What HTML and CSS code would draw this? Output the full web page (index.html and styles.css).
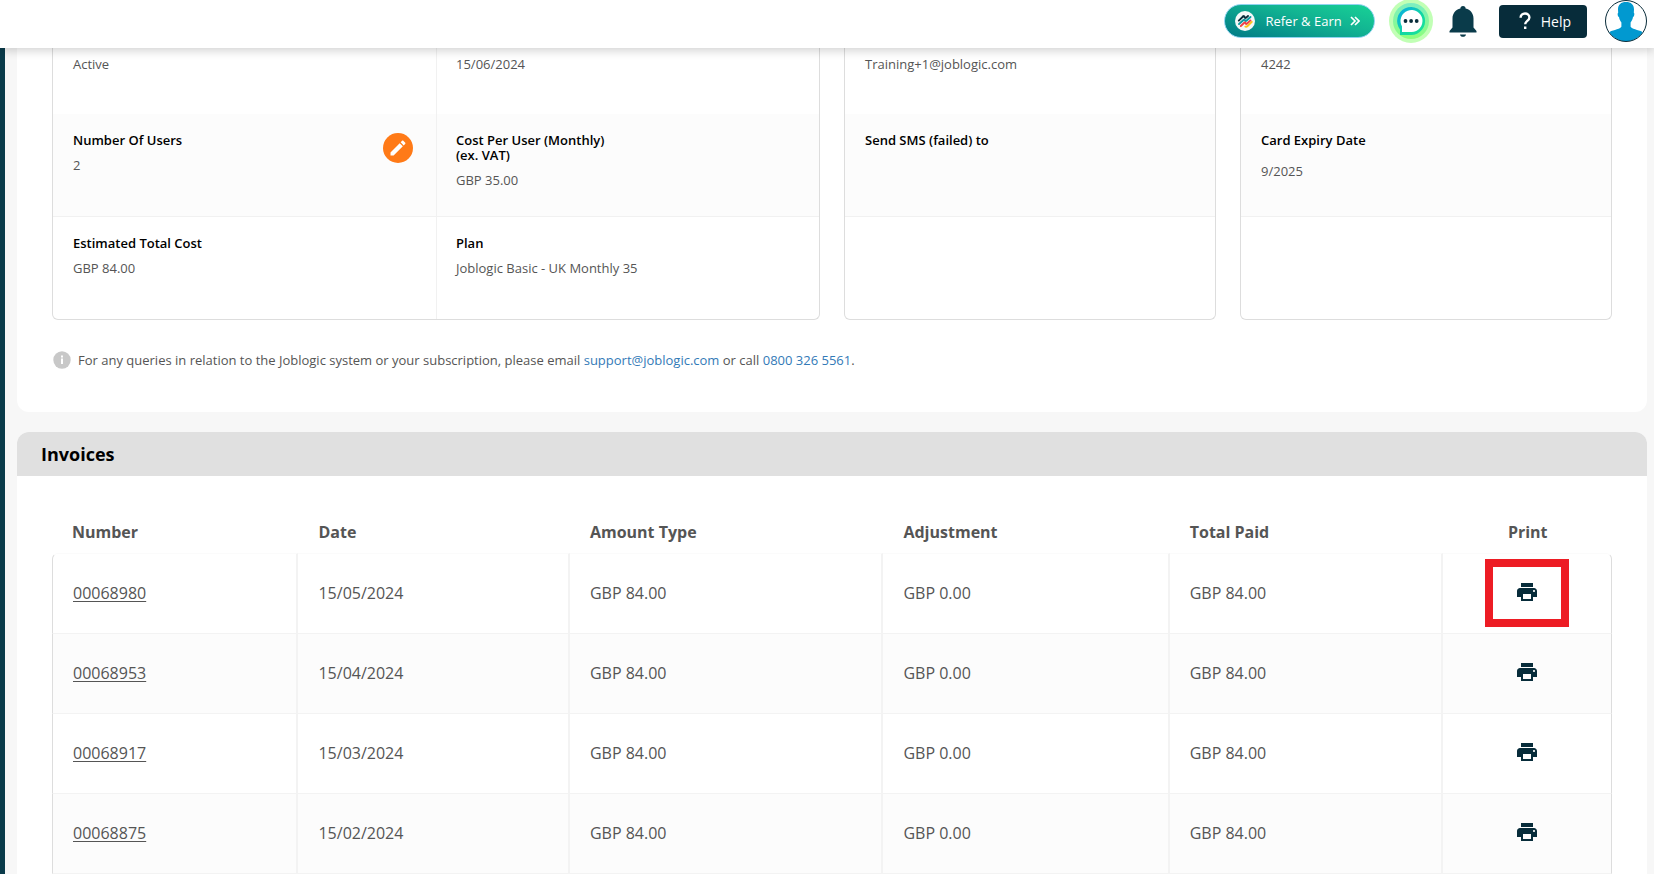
FILE: index.html
```html
<!DOCTYPE html>
<html lang="en">
<head>
<meta charset="utf-8">
<title>Subscription</title>
<link rel="stylesheet" href="styles.css">
</head>
<body>
<svg class="sprite" aria-hidden="true">
  <symbol id="print" viewBox="0 0 24 24"><path d="M19 8H5c-1.660 0-3 1.340-3 3v6h4v4h12v-4h4v-6c0-1.660-1.340-3-3-3zm-3 11H8v-5h8v5zm3-7c-.55 0-1-.45-1-1s.45-1 1-1 1 .45 1 1-.45 1-1 1zm-1-9H6v4h12V3z"/></symbol>
</svg>
<header class="topbar">
  <button class="refer" type="button">
    <svg class="refer-logo" viewBox="0 0 20 20" aria-hidden="true">
      <circle cx="10" cy="10" r="10" fill="#f4f8f8"/>
      <g fill="none" stroke-width="1.900" stroke-linecap="round" stroke-linejoin="round">
        <path d="M3.800 9.600 8.300 5.300" stroke="#0a2c3a"/>
        <path d="M8.300 5.300q1.300-.6 1.300.8t1.600.5L13 5" stroke="#0a2c3a"/>
        <path d="M4 13 8.500 9q1.300-.8 1.600.4t1.600.1L15.500 6" stroke="#0a9aa0"/>
        <path d="M5.800 15 9.300 11.700q1.200-.6 1.400.6t1.500.2L15.500 9.400" stroke="#ee4046"/>
        <path d="M10.300 15.600q1.300.4 2.300-.6L16.800 10.800" stroke="#fbc51b"/>
      </g>
    </svg>
    <span>Refer &amp; Earn</span>
    <svg class="refer-arrows" viewBox="0 0 10 10" aria-hidden="true"><path d="M1 1l4 4-4 4M5 1l4 4-4 4" fill="none" stroke="#fff" stroke-width="1.700"/></svg>
  </button>
  <button class="icon-button chat" type="button" aria-label="Chat">
    <svg viewBox="0 0 44 44">
      <defs><linearGradient id="chatRing" x1="0" y1="0" x2="1" y2="1"><stop offset="0" stop-color="#08a9e8"/><stop offset=".6" stop-color="#12d9a0"/><stop offset="1" stop-color="#1be39a"/></linearGradient>
      <linearGradient id="chatGlow" x1="0" y1="0" x2="0" y2="1"><stop offset="0" stop-color="#7ceec2"/><stop offset="1" stop-color="#8dff7c"/></linearGradient></defs>
      <circle cx="22" cy="22" r="22" fill="#c1ffb5"/>
      <circle cx="22" cy="22" r="18" fill="url(#chatGlow)"/>
      <path d="M11 36V30.500A14 14 0 1 1 22 36z" fill="url(#chatRing)"/>
      <path d="M13 33V27.500A11 11 0 1 1 22.500 33z" fill="#fff"/>
      <g fill="#082c3a"><circle cx="16.500" cy="22" r="1.900"/><circle cx="22.100" cy="22" r="1.900"/><circle cx="27.700" cy="22" r="1.900"/></g>
    </svg>
  </button>
  <button class="icon-button bell" type="button" aria-label="Notifications">
    <svg viewBox="0 0 28 32"><path d="M14 1a2.600 2.600 0 0 1 2.600 2.600C21.500 4.800 24.500 8.500 24.500 13.500v9l3 3.500V27.500H.5V26l3-3.500v-9c0-5 3-8.700 7.900-9.900A2.600 2.600 0 0 1 14 1zM11 29.500h6c-.2 1.400-1.500 2.300-3 2.300s-2.800-.9-3-2.300z" fill="#0a3b4a"/></svg>
  </button>
  <button class="help" type="button"><svg viewBox="0 0 12 18" aria-hidden="true"><path d="M1.600 5.800C1.600 3.300 3.500 1.500 6 1.500s4.400 1.700 4.400 4c0 3.200-4.200 3.600-4.200 6.700" fill="none" stroke="#fff" stroke-width="2.400"/><path d="M5 14.500h2.400V17H5z" fill="#fff"/></svg><span>Help</span></button>
  <button class="icon-button avatar" type="button" aria-label="Profile">
    <svg viewBox="0 0 42 42"><defs><clipPath id="face"><circle cx="21" cy="21" r="20.300"/></clipPath></defs><circle cx="21" cy="21" r="20.500" fill="#fff"/><path clip-path="url(#face)" d="M21 2c5 0 8 2.500 8 7.500l-.2 3.200c.9.400.7 3.600-.8 4.400-.4 2.400-1.200 3.900-2.400 5.400v4.200c3 3.500 9.500 2.800 13.400 6.300V42H3v-9c3.900-3.500 10.400-2.800 13.400-6.300v-4.200c-1.200-1.500-2-3-2.400-5.400-1.500-.8-1.700-4-.8-4.400L13 9.500C13 4.500 16 2 21 2z" fill="#0199d0"/><circle cx="21" cy="21" r="20.500" fill="none" stroke="#0a2c3a"/></svg>
  </button>
</header>

<main class="page">
  <section class="panel subscription">
    <div class="cards">
      <div class="card card-wide">
        <div class="cell"><p class="value">Active</p></div>
        <div class="cell"><p class="value">15/06/2024</p></div>
        <div class="cell shaded with-action">
          <div><h3 class="label">Number Of Users</h3><p class="value">2</p></div>
          <button class="edit" type="button" aria-label="Edit number of users"><svg viewBox="0 0 24 24"><path d="M3 17.250V21h3.750L17.810 9.940l-3.750-3.750L3 17.250zM20.710 7.040c.39-.39.39-1.020 0-1.410l-2.340-2.340c-.39-.39-1.020-.39-1.410 0l-1.830 1.830 3.750 3.750 1.830-1.830z" fill="#fff"/></svg></button>
        </div>
        <div class="cell shaded"><h3 class="label">Cost Per User (Monthly)<br>(ex. VAT)</h3><p class="value">GBP 35.00</p></div>
        <div class="cell"><h3 class="label">Estimated Total Cost</h3><p class="value">GBP 84.00</p></div>
        <div class="cell"><h3 class="label">Plan</h3><p class="value">Joblogic Basic - UK Monthly 35</p></div>
      </div>
      <div class="card">
        <div class="cell"><p class="value">Training+1@joblogic.com</p></div>
        <div class="cell shaded"><h3 class="label">Send SMS (failed) to</h3></div>
        <div class="cell"></div>
      </div>
      <div class="card">
        <div class="cell"><p class="value">4242</p></div>
        <div class="cell shaded spaced"><h3 class="label">Card Expiry Date</h3><p class="value">9/2025</p></div>
        <div class="cell"></div>
      </div>
    </div>
    <div class="note">
      <svg viewBox="0 0 18 18" aria-hidden="true"><circle cx="9" cy="9" r="8.700" fill="#c8c8c8"/><path d="M8 4.500h2v2H8zM8 7.500h2V13H8z" fill="#fff"/></svg>
      <p>For any queries in relation to the Joblogic system or your subscription, please email <a href="mailto:support@joblogic.com">support@joblogic.com</a> or call <a href="tel:08003265561">0800 326 5561</a>.</p>
    </div>
  </section>

  <section class="panel">
    <h2 class="panel-title">Invoices</h2>
    <div class="invoice-body">
      <table class="invoices">
        <colgroup><col class="col-number"><col class="col-date"><col class="col-amount"><col class="col-adjust"><col class="col-total"><col class="col-print"></colgroup>
        <thead><tr><th>Number</th><th>Date</th><th>Amount Type</th><th>Adjustment</th><th>Total Paid</th><th>Print</th></tr></thead>
        <tbody>
          <tr><td><a href="#">00068980</a></td><td>15/05/2024</td><td>GBP 84.00</td><td>GBP 0.00</td><td>GBP 84.00</td><td><button class="print highlighted" type="button" aria-label="Print invoice 00068980"><svg><use href="#print"/></svg></button></td></tr>
          <tr><td><a href="#">00068953</a></td><td>15/04/2024</td><td>GBP 84.00</td><td>GBP 0.00</td><td>GBP 84.00</td><td><button class="print" type="button" aria-label="Print invoice 00068953"><svg><use href="#print"/></svg></button></td></tr>
          <tr><td><a href="#">00068917</a></td><td>15/03/2024</td><td>GBP 84.00</td><td>GBP 0.00</td><td>GBP 84.00</td><td><button class="print" type="button" aria-label="Print invoice 00068917"><svg><use href="#print"/></svg></button></td></tr>
          <tr><td><a href="#">00068875</a></td><td>15/02/2024</td><td>GBP 84.00</td><td>GBP 0.00</td><td>GBP 84.00</td><td><button class="print" type="button" aria-label="Print invoice 00068875"><svg><use href="#print"/></svg></button></td></tr>
        </tbody>
      </table>
    </div>
  </section>
</main>
</body>
</html>
```
FILE: styles.css
```css
* { box-sizing: border-box; }
html { height: 100%; }
body {
  display: flex;
  flex-direction: column;
  height: 100%;
  margin: 0;
  overflow: hidden;
  background: #f7f7f7;
  color: #555;
  font-family: "Open Sans", "Noto Sans", sans-serif;
  font-size: 13px;
}
h2, h3, p { margin: 0; }
button { padding: 0; border: 0; background: none; font: inherit; cursor: pointer; }
svg { display: block; }
.sprite { position: absolute; width: 0; height: 0; }

.topbar {
  position: relative;
  z-index: 1;
  display: flex;
  flex: none;
  justify-content: flex-end;
  align-items: center;
  height: 48px;
  padding: 0 7px 6px 0;
  background: #fff;
  box-shadow: 0 2px 10px rgba(0, 0, 0, .2);
}
.refer {
  display: flex;
  align-items: center;
  height: 34px;
  padding: 0 14px 0 10px;
  border: 1px solid #8fd3f0;
  border-radius: 17px;
  background: linear-gradient(15deg, #007a86, #12b492 60%, #18d296);
  color: #fff;
}
.refer-logo { width: 20px; height: 20px; margin-right: 10px; }
.refer-arrows { width: 10px; height: 10px; margin-left: 8px; }
.icon-button svg { width: 100%; height: 100%; }
.chat { width: 44px; height: 44px; margin-left: 14px; }
.bell { width: 28px; height: 32px; margin-left: 16px; }
.help {
  display: flex;
  align-items: center;
  gap: 10px;
  height: 33px;
  margin-left: 22px;
  padding: 0 16px 0 20px;
  border-radius: 4px;
  background: #072c3a;
  color: #fff;
  font-size: 14px;
}
.help svg { width: 12px; height: 18px; }
.avatar { width: 42px; height: 42px; margin-left: 18px; }

.page {
  flex: 1;
  min-height: 0;
  overflow: hidden;
  padding: 0 7px 0 12px;
  border-left: 5px solid #0a3b4a;
}
.panel { border-radius: 12px; background: #fff; overflow: hidden; }
.subscription { margin-bottom: 20px; padding: 0 35px 42px; border-radius: 0 0 12px 12px; }
.cards { display: grid; grid-template-columns: repeat(4, 1fr); gap: 24px; }
.card {
  display: grid;
  grid-template-rows: 66px 103px 102px;
  border: 1px solid #ddd;
  border-top: 0;
  border-radius: 0 0 6px 6px;
  overflow: hidden;
}
.card-wide { grid-column: span 2; grid-template-columns: 1fr 1fr; }
.cell { padding: 19px 20px 0; }
.cell:has(> .value:first-child) { padding-top: 7px; }
.card-wide .cell:nth-child(even) { border-left: 1px solid #f1f1f1; padding-left: 19px; }
.shaded { border-bottom: 1px solid #f1f1f1; background: #fcfcfc; }
.label { padding-bottom: 8px; color: #000; font-size: 13px; font-weight: 600; line-height: 15px; }
.value { line-height: 18px; }
.spaced .label { padding-bottom: 14px; }
.with-action { display: flex; justify-content: space-between; }
.edit {
  display: grid;
  place-items: center;
  width: 30px;
  height: 30px;
  margin-right: 3px;
  border-radius: 50%;
  background: #ff7a17;
}
.edit svg { width: 20px; height: 20px; }
.note { display: flex; align-items: center; gap: 7px; padding-top: 30px; line-height: 20px; }
.note svg { width: 18px; height: 18px; margin-left: 1px; }
.note a { color: #337ab7; text-decoration: none; }

.panel-title {
  padding: 0 24px;
  background: #e0e0e0;
  color: #000;
  font-size: 18px;
  font-weight: 700;
  line-height: 44px;
}
.invoice-body { padding: 37px 35px; }
.invoices { width: 100%; table-layout: fixed; border-collapse: separate; border-spacing: 0; font-size: 16px; }
.col-number { width: 15.8%; }
.col-date { width: 17.4%; }
.col-amount { width: 20.1%; }
.col-adjust { width: 18.35%; }
.col-total { width: 17.55%; }
.invoices th { height: 40px; padding: 0 20px 3px; font-weight: 700; text-align: left; }
.invoices td { height: 80px; padding: 0 20px 2px; border-right: 2px solid #f3f3f3; border-bottom: 1px solid #f3f3f3; }
.invoices tr > :last-child { padding-left: 0; padding-right: 0; text-align: center; }
.invoices td:first-child { border-left: 1px solid #ddd; }
.invoices td:last-child { border-right: 1px solid #ddd; }
.invoices tbody tr:first-child td { border-top: 1px solid #fbfbfb; height: 81px; }
.invoices tbody tr:first-child td:first-child { border-top-left-radius: 6px; }
.invoices tbody tr:first-child td:last-child { border-top-right-radius: 6px; }
.invoices tbody tr:nth-child(even) { background: #fcfcfc; }
.invoices a { color: inherit; text-underline-offset: 2px; }
.print { display: grid; place-items: center; width: 84px; height: 68px; margin: 0 auto; padding-bottom: 2px; }
.print svg { width: 24px; height: 24px; fill: #072c3a; }
.highlighted { border: 8px solid #ed1c24; }
```
